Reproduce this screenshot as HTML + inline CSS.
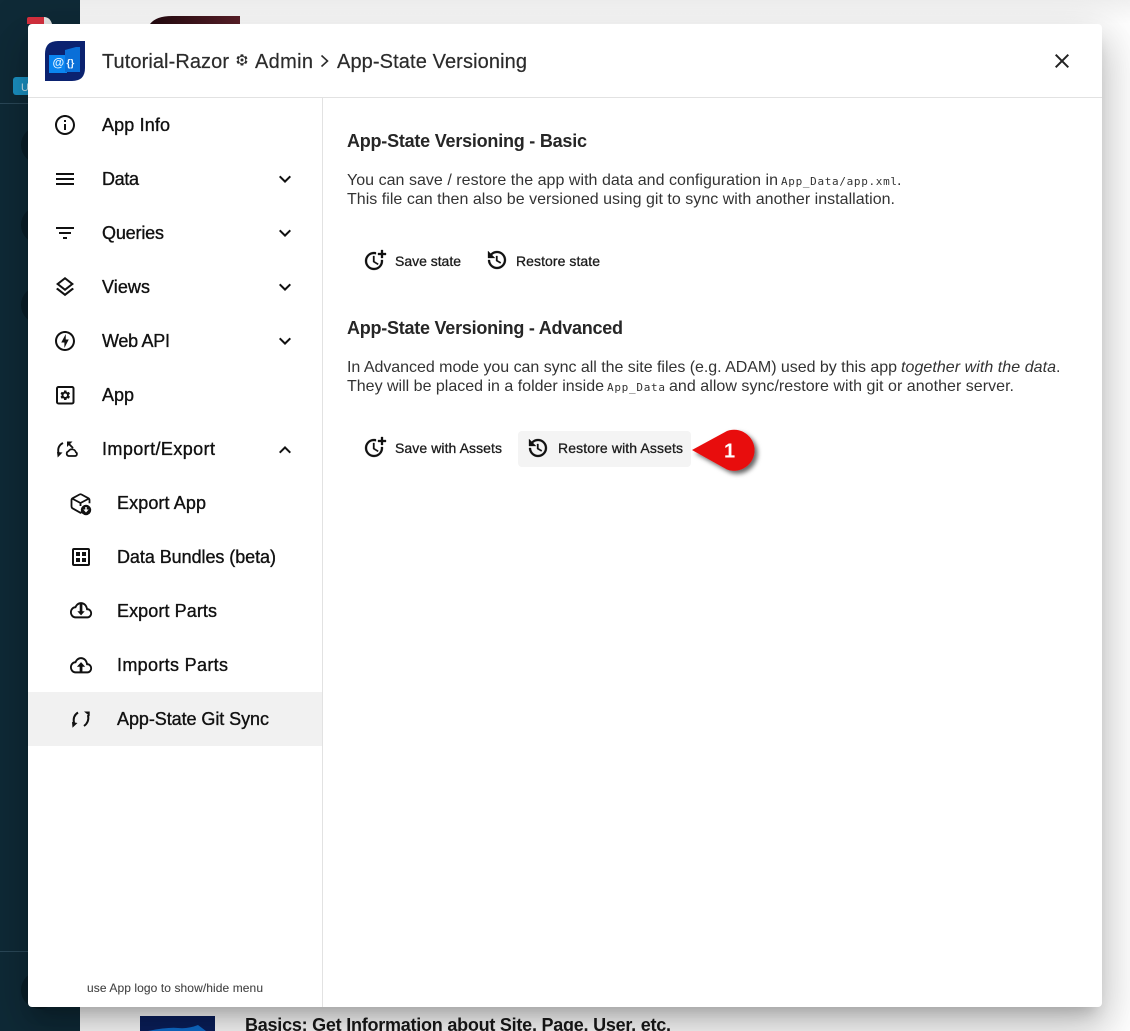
<!DOCTYPE html>
<html><head><meta charset="utf-8"><style>
html,body{margin:0;padding:0;width:1130px;height:1031px;overflow:hidden;background:#fff}
#nav{position:absolute;left:0;top:0;width:80px;height:1031px;background:#0f2a37}
#top{position:absolute;left:80px;top:0;width:1050px;height:24px;background:linear-gradient(#f0f0f0,#fff)}
#modal{position:absolute;left:28px;top:24px;width:1074px;height:983px;background:#fff;border-radius:4px;box-shadow:0 11px 15px -7px rgba(0,0,0,.2),0 24px 38px 3px rgba(0,0,0,.14),0 9px 46px 8px rgba(0,0,0,.12)}
svg{position:absolute;left:0;top:0}
text{font-family:"Liberation Sans",sans-serif}
.m{font-size:18px;fill:#111;stroke:#111;stroke-width:.35}
.t{font-size:20px;fill:#2b2b2b;stroke:#2b2b2b;stroke-width:.2}
.h{font-size:18px;font-weight:bold;fill:#262626}
.p{font-size:16px;fill:#333}
.c{font-family:"DejaVu Sans Mono","Liberation Mono",monospace;font-size:11px;fill:#333}
.b{font-size:14px;fill:#1c1c1c;stroke:#1c1c1c;stroke-width:.3}
</style></head><body>
<div id="nav"></div><div id="top"></div>
<svg width="1130" height="1031" viewBox="0 0 1130 1031">
<defs><linearGradient id="rd" x1="0" x2="1"><stop offset="0" stop-color="#240a10"/><stop offset="1" stop-color="#5a2029"/></linearGradient></defs>
<rect x="0" y="103" width="80" height="1" fill="#2a4858"/><rect x="0" y="951" width="80" height="1" fill="#2a4858"/>
<circle cx="40" cy="145" r="19" fill="#0a1f29"/><circle cx="40" cy="225" r="19" fill="#0a1f29"/><circle cx="40" cy="305" r="19" fill="#0a1f29"/><circle cx="40" cy="990" r="19" fill="#0a1f29"/>
<path d="M27 24v-5q0-2 2-2h15l8 7z" fill="#d8313f"/><path d="M44 17q6 0 8 7h-8z" fill="#e8e8e8"/>
<rect x="13" y="77" width="20" height="18" rx="3" fill="#1b92c4"/>
<text x="21" y="91" font-size="11" fill="#cfe8f2">U</text>
<path d="M150 24q6-8 22-8h68v8z" fill="url(#rd)"/>
<rect x="140" y="1016" width="75" height="15" fill="#0a1f5c"/><path d="M148 1031q20-4 30-3t20-3l8 6z" fill="#0f6fd0"/>
<text x="245" y="1031" font-size="18" font-weight="bold" fill="#1a1a1a" textLength="426" lengthAdjust="spacing">Basics: Get Information about Site, Page, User, etc.</text>
</svg>
<div id="modal"></div>
<svg width="1130" height="1031" viewBox="0 0 1130 1031">
<defs><filter id="ds" x="-30%" y="-30%" width="170%" height="170%"><feDropShadow dx="3" dy="3" stdDeviation="2.5" flood-color="#000" flood-opacity=".6"/></filter></defs>
<rect x="28" y="97" width="1074" height="1" fill="#e2e2e2"/>
<rect x="322" y="98" width="1" height="909" fill="#e2e2e2"/>
<rect x="28" y="692" width="294" height="54" fill="#f1f1f1"/>

<!-- logo -->
<path d="M45 81V54Q45 41 58 41H85V68Q85 81 72 81Z" fill="#0b2270"/>
<path d="M49 55h18v18H49z" fill="#0a84f0"/><path d="M65 50l11-3h4v25H65z" fill="#0a6fd8"/>
<text x="52.500" y="66.500" font-size="12" font-weight="bold" fill="#e6f3ff">@</text>
<text x="66.500" y="66.500" font-size="10" font-weight="bold" fill="#eef7ff">{}</text>

<!-- title -->
<text class="t" x="102" y="68" textLength="127" lengthAdjust="spacing">Tutorial-Razor</text>
<path transform="translate(235,53) scale(.58)" fill="#2b2b2b" d="M19.14 12.94c.04-.3.06-.61.06-.94 0-.32-.02-.64-.07-.94l2.03-1.58c.18-.14.23-.41.12-.61l-1.92-3.32c-.12-.22-.37-.29-.59-.22l-2.39.96c-.5-.38-1.03-.7-1.62-.94l-.36-2.54c-.04-.24-.24-.41-.48-.41h-3.84c-.24 0-.43.17-.47.41l-.36 2.54c-.59.24-1.13.57-1.62.94l-2.39-.96c-.22-.08-.47 0-.59.22L2.74 8.87c-.12.21-.08.47.12.61l2.03 1.58c-.05.3-.09.63-.09.94s.02.64.07.94l-2.03 1.58c-.18.14-.23.41-.12.61l1.92 3.32c.12.22.37.29.59.22l2.39-.96c.5.38 1.03.7 1.62.94l.36 2.54c.05.24.24.41.48.41h3.84c.24 0 .44-.17.47-.41l.36-2.54c.59-.24 1.13-.56 1.62-.94l2.39.96c.22.08.47 0 .59-.22l1.92-3.32c.12-.22.07-.47-.12-.61l-2.01-1.58z"/>
<circle cx="242" cy="60" r="3.300" fill="#fff"/><circle cx="242" cy="60" r="1.500" fill="#2b2b2b"/>
<text class="t" x="255" y="68" textLength="58" lengthAdjust="spacing">Admin</text>
<path d="M321.500 55.500l6 5.500-6 5.500" fill="none" stroke="#2b2b2b" stroke-width="1.600"/>
<text class="t" x="337" y="68" textLength="190" lengthAdjust="spacing">App-State Versioning</text>
<path transform="translate(1050,49)" fill="#222" d="M19 6.41L17.59 5 12 10.59 6.41 5 5 6.41 10.59 12 5 17.59 6.41 19 12 13.41 17.59 19 19 17.59 13.41 12z"/>

<!-- menu text -->
<text class="m" x="102" y="131" textLength="68" lengthAdjust="spacing">App Info</text>
<text class="m" x="102" y="185" textLength="37" lengthAdjust="spacing">Data</text>
<text class="m" x="102" y="239" textLength="62" lengthAdjust="spacing">Queries</text>
<text class="m" x="102" y="293" textLength="48" lengthAdjust="spacing">Views</text>
<text class="m" x="102" y="347" textLength="68" lengthAdjust="spacing">Web API</text>
<text class="m" x="102" y="401" textLength="32" lengthAdjust="spacing">App</text>
<text class="m" x="102" y="455" textLength="113" lengthAdjust="spacing">Import/Export</text>
<text class="m" x="117" y="509" textLength="89" lengthAdjust="spacing">Export App</text>
<text class="m" x="117" y="563" textLength="159" lengthAdjust="spacing">Data Bundles (beta)</text>
<text class="m" x="117" y="617" textLength="100" lengthAdjust="spacing">Export Parts</text>
<text class="m" x="117" y="671" textLength="111" lengthAdjust="spacing">Imports Parts</text>
<text class="m" x="117" y="725" textLength="152" lengthAdjust="spacing">App-State Git Sync</text>
<text x="87" y="992" font-size="12" fill="#444" stroke="#444" stroke-width=".1" textLength="176" lengthAdjust="spacing">use App logo to show/hide menu</text>

<!-- menu icons -->
<g fill="#111">
<path transform="translate(53,113)" d="M11 7h2v2h-2zm0 4h2v6h-2zm1-9C6.48 2 2 6.48 2 12s4.480 10 10 10 10-4.480 10-10S17.520 2 12 2zm0 18c-4.410 0-8-3.590-8-8s3.590-8 8-8 8 3.590 8 8-3.590 8-8 8z"/>
<path transform="translate(53,167)" d="M3 18h18v-2H3v2zm0-5h18v-2H3v2zm0-7v2h18V6H3z"/>
<path transform="translate(53,221)" d="M10 18h4v-2h-4v2zM3 6v2h18V6H3zm3 7h12v-2H6v2z"/>
<path transform="translate(53,275)" d="M11.990 18.540l-7.370-5.730L3 14.070l9 7 9-7-1.630-1.270zM12 16l7.360-5.730L21 9l-9-7-9 7 1.630 1.270L12 16zm0-11.470L17.740 9 12 13.470 6.260 9 12 4.530z"/>
<path transform="translate(53,329)" d="M12 2.020c-5.510 0-9.980 4.470-9.980 9.980s4.470 9.980 9.980 9.980 9.980-4.470 9.980-9.980S17.510 2.020 12 2.020zm0 17.960c-4.400 0-7.980-3.580-7.980-7.980S7.600 4.020 12 4.020 19.980 7.600 19.980 12 16.400 19.980 12 19.980zM12.750 5l-4.500 8.500h3.140V19l4.360-8.500h-3z"/>
<rect x="57" y="387" width="16.500" height="16.500" rx="1.500" fill="none" stroke="#111" stroke-width="2"/>
<path transform="translate(59.250,389.250) scale(.5)" d="M19.140 12.940c.04-.3.06-.61.06-.94 0-.32-.02-.64-.07-.94l2.030-1.580c.18-.14.23-.41.12-.61l-1.920-3.320c-.12-.22-.37-.29-.59-.22l-2.390.96c-.5-.38-1.030-.7-1.620-.94l-.36-2.540c-.04-.24-.24-.41-.48-.41h-3.840c-.24 0-.43.17-.47.41l-.36 2.540c-.59.24-1.130.57-1.620.94l-2.390-.96c-.22-.08-.47 0-.59.22L2.740 8.870c-.12.21-.08.47.12.61l2.030 1.580c-.05.3-.09.63-.09.94s.02.64.07.94l-2.030 1.580c-.18.14-.23.41-.12.61l1.920 3.320c.12.22.37.29.59.22l2.390-.96c.5.38 1.030.7 1.620.94l.36 2.540c.05.24.24.41.48.41h3.840c.24 0 .44-.17.47-.41l.36-2.540c.59-.24 1.130-.56 1.620-.94l2.390.96c.22.08.47 0 .59-.22l1.920-3.320c.12-.22.07-.47-.12-.61l-2.010-1.580zM12 15.600c-1.980 0-3.600-1.620-3.600-3.600s1.620-3.600 3.600-3.600 3.600 1.620 3.600 3.600-1.620 3.600-3.600 3.600z"/>
</g>
<g fill="#111">
<path transform="translate(273,167)" d="M16.590 8.590L12 13.170 7.410 8.590 6 10l6 6 6-6z"/>
<path transform="translate(273,221)" d="M16.590 8.590L12 13.170 7.410 8.590 6 10l6 6 6-6z"/>
<path transform="translate(273,275)" d="M16.590 8.590L12 13.170 7.410 8.590 6 10l6 6 6-6z"/>
<path transform="translate(273,329)" d="M16.590 8.590L12 13.170 7.410 8.590 6 10l6 6 6-6z"/>
<path transform="translate(273,438)" d="M12 8l-6 6 1.410 1.410L12 10.830l4.590 4.580L18 14z"/>
</g>
<!-- import/export -->
<g fill="none" stroke="#111" stroke-width="1.900">
<path d="M63 443q-6 3-4.500 10"/><path d="M68 443l5 5"/>
<path d="M68.500 456h6.500a2 2 0 0 0 .8-3.800a4 4 0 0 0-7.300-1a2.500 2.500 0 0 0 0 4.800z" stroke-width="1.700"/>
</g>
<path d="M57 452l5.500 .5-4.800 5zM67 441.500h5.500l-5.500 5.500z" fill="#111"/>
<!-- export app -->
<path d="M83 511.500l-2.500 1.300-8-4.500q-1-.6-1-2v-6q0-1.400 1-2l7-3.800q1-.5 2 0l7 3.800q1 .6 1 2v3M72 498.500l8.500 4.500 8.500-4.500M80.500 503v3" fill="none" stroke="#111" stroke-width="1.800"/>
<circle cx="86" cy="510" r="5.200" fill="#111"/><path d="M83.300 509.500h5.400l-2.700 3zM85.300 507h1.400v3h-1.400z" fill="#fff"/>
<!-- data bundles -->
<rect x="73" y="549" width="16" height="16" rx="1" fill="none" stroke="#111" stroke-width="2"/>
<path d="M76 552h4v4h-4zM82 552h4v4h-4zM76 558h4v4h-4zM82 558h4v4h-4z" fill="#111"/>
<!-- clouds -->
<path transform="translate(70,598) scale(.92,1.02)" fill="#111" d="M19.350 10.040C18.670 6.590 15.640 4 12 4 9.110 4 6.600 5.640 5.350 8.040 2.340 8.360 0 10.910 0 14c0 3.310 2.690 6 6 6h13c2.760 0 5-2.240 5-5 0-2.640-2.050-4.780-4.650-4.960zM19 18H6c-2.210 0-4-1.790-4-4 0-2.050 1.530-3.760 3.560-3.970l1.070-.11.500-.95C8.080 7.140 9.940 6 12 6c2.620 0 4.880 1.860 5.390 4.430l.3 1.500 1.530.11c1.560.1 2.780 1.410 2.780 2.960 0 1.650-1.350 3-3 3zM13.450 6h-2.900v7H8l4 4 4-4h-2.550z"/>
<path transform="translate(70,653) scale(.92,1.02)" fill="#111" d="M19.350 10.040C18.670 6.590 15.640 4 12 4 9.110 4 6.600 5.640 5.350 8.040 2.340 8.360 0 10.910 0 14c0 3.310 2.690 6 6 6h5v-2H6c-2.210 0-4-1.790-4-4 0-2.050 1.530-3.760 3.560-3.970l1.070-.11.500-.95C8.080 7.140 9.940 6 12 6c2.620 0 4.880 1.860 5.390 4.430l.3 1.500 1.530.11c1.560.1 2.780 1.410 2.780 2.960 0 1.650-1.350 3-3 3h-6v2h6c2.760 0 5-2.240 5-5 0-2.640-2.050-4.780-4.650-4.960zM12 9l-4.500 4.500h3V20h3v-6.500h3z"/>
<!-- git sync -->
<g fill="none" stroke="#111" stroke-width="2"><path d="M78 712.500Q72.500 716 74 723"/><path d="M84 726Q89.500 722 88 715"/></g>
<path d="M72 722l5.500 1-5 4.700zM84 711.500h5.700v4.700z" fill="#111"/>

<!-- content -->
<text class="h" x="347" y="147" textLength="240" lengthAdjust="spacing">App-State Versioning - Basic</text>
<text class="p" x="347" y="185" textLength="431" lengthAdjust="spacing">You can save / restore the app with data and configuration in</text>
<text class="c" x="781" y="185" textLength="116" lengthAdjust="spacing">App_Data/app.xml</text>
<text class="p" x="897" y="185">.</text>
<text class="p" x="347" y="204" textLength="548" lengthAdjust="spacing">This file can then also be versioned using git to sync with another installation.</text>

<text class="h" x="347" y="334" textLength="276" lengthAdjust="spacing">App-State Versioning - Advanced</text>
<text class="p" x="347" y="372" textLength="550" lengthAdjust="spacing">In Advanced mode you can sync all the site files (e.g. ADAM) used by this app</text>
<text class="p" x="901" y="372" font-style="italic" textLength="155" lengthAdjust="spacing">together with the data</text>
<text class="p" x="1056" y="372">.</text>
<text class="p" x="347" y="391" textLength="257" lengthAdjust="spacing">They will be placed in a folder inside</text>
<text class="c" x="607" y="391" textLength="58" lengthAdjust="spacing">App_Data</text>
<text class="p" x="669" y="391" textLength="345" lengthAdjust="spacing">and allow sync/restore with git or another server.</text>

<!-- buttons -->
<rect x="518" y="431" width="173" height="36" rx="4" fill="#f4f4f4"/>
<g fill="#111" stroke="#111" stroke-width=".3">
<path transform="translate(363,248)" d="M10 8v6l4.700 2.900.8-1.200-4-2.400V8z M17.920 12c.05.33.08.66.08 1 0 3.900-3.100 7-7 7s-7-3.100-7-7 3.100-7 7-7c.7 0 1.370.1 2 .29V4.230C12.360 4.080 11.690 4 11 4c-5 0-9 4-9 9s4 9 9 9 9-4 9-9c0-.34-.02-.67-.06-1h-2.020zM20 5V2h-2v3h-3v2h3v3h2V7h3V5z"/>
<path transform="translate(363,435)" d="M10 8v6l4.700 2.900.8-1.200-4-2.400V8z M17.920 12c.05.33.08.66.08 1 0 3.900-3.100 7-7 7s-7-3.100-7-7 3.100-7 7-7c.7 0 1.370.1 2 .29V4.230C12.360 4.080 11.690 4 11 4c-5 0-9 4-9 9s4 9 9 9 9-4 9-9c0-.34-.02-.67-.06-1h-2.020zM20 5V2h-2v3h-3v2h3v3h2V7h3V5z"/>
<path transform="translate(485,248)" d="M12 3a9 9 0 0 0-6.360 2.640L3 3v7h7L7.050 7.050A7 7 0 1 1 5 12H3a9 9 0 1 0 9-9zm-1 5v5l4.300 2.500.7-1.200-3.500-2.100V8z"/>
<path transform="translate(526,436)" d="M12 3a9 9 0 0 0-6.360 2.640L3 3v7h7L7.050 7.050A7 7 0 1 1 5 12H3a9 9 0 1 0 9-9zm-1 5v5l4.300 2.500.7-1.200-3.500-2.100V8z"/>
</g>
<text class="b" x="395" y="266" textLength="66" lengthAdjust="spacing">Save state</text>
<text class="b" x="516" y="266" textLength="84" lengthAdjust="spacing">Restore state</text>
<text class="b" x="395" y="453" textLength="107" lengthAdjust="spacing">Save with Assets</text>
<text class="b" x="558" y="453" textLength="125" lengthAdjust="spacing">Restore with Assets</text>

<!-- callout -->
<path filter="url(#ds)" d="M692 450L727 431A20.500 20.500 0 1 1 727 469.500Z" fill="#e80909"/>
<text x="724" y="457.500" font-size="20" font-weight="bold" fill="#fff" stroke="none">1</text>
</svg>
</body></html>
